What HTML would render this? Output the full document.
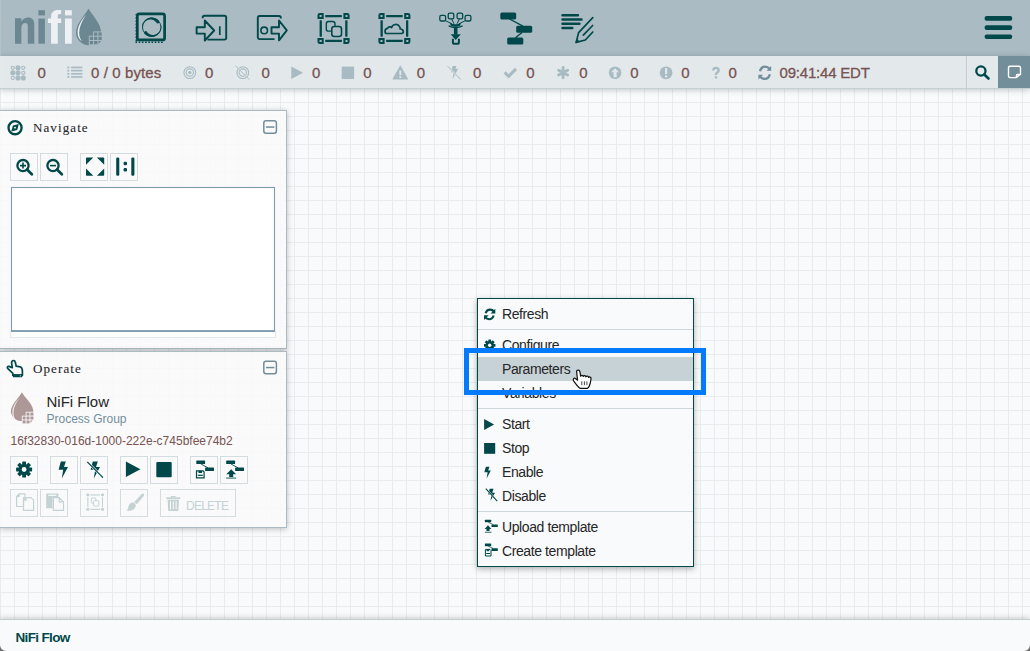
<!DOCTYPE html>
<html><head><meta charset="utf-8">
<style>
*{box-sizing:border-box}
html,body{margin:0;padding:0}
body{width:1030px;height:651px;overflow:hidden;position:relative;font-family:"Liberation Sans",sans-serif;background:#f9fafb}
.abs{position:absolute}
#canvas{position:absolute;left:0;top:88px;width:1030px;height:563px;background-color:#f9fafb;
 background-image:linear-gradient(to right,#e8ecee 1px,transparent 1px),linear-gradient(to bottom,#e8ecee 1px,transparent 1px);
 background-size:14px 14px}
#header{position:absolute;left:0;top:0;width:1030px;height:56px;background:#aabbc3}
#status{position:absolute;left:0;top:56px;width:1030px;height:33px;background:#e3e8eb;border-bottom:1px solid #c5d0d5;box-shadow:0 1px 6px rgba(0,0,0,0.22)}
#breadcrumbs{position:absolute;left:0;top:619px;width:1030px;height:32px;background:rgba(249,250,251,0.92);border-top:1px solid #c3ced3;box-shadow:0 -1px 6px rgba(0,0,0,0.2)}
.val{position:absolute;top:64px;font-size:15px;color:#775351;line-height:18px;-webkit-text-stroke:0.3px #775351}
.sico{position:absolute;fill:#a9bcc4}
svg{position:absolute;overflow:visible}
.panel{position:absolute;left:0;width:287px;background:rgba(249,250,251,0.9);border:1px solid #aabbc3;border-left:none;box-shadow:0 1px 6px rgba(0,0,0,0.25)}
.sep{position:absolute;left:0;width:215px;height:1px;background:#cdd6da}
.mi{position:absolute;left:502px;font-size:14px;line-height:16px;color:#262626;letter-spacing:-0.4px}
.ptitle{position:absolute;font-family:"Liberation Serif",serif;font-size:13px;line-height:16px;color:#262626;letter-spacing:1.1px;-webkit-text-stroke:0.1px #262626}
</style></head>
<body>
<div id="canvas"></div>

<div id="header">
<svg width="1030" height="56" viewBox="0 0 1030 56" style="left:0;top:0">
 <!-- logo -->
 <g fill="#6b8792">
  <path d="M15 18.2 H21.4 V21.6 C23 19 25.5 17.5 28.3 17.5 C32 17.5 34.3 20 34.3 24.5 V43.7 H27.8 V26 C27.8 24 27 23 25.3 23 C23.2 23 21.4 24.8 21.4 27.5 V43.7 H15 Z"/>
  <rect x="38.4" y="18.6" width="6.5" height="25.1"/>
  <rect x="38.4" y="10.2" width="6.5" height="5.2"/>
 </g>
 <g fill="#eef1f3">
  <path d="M51.1 43.7 V23.1 H47.9 V18.5 H51.1 V17 C51.1 12.2 53.6 10 58 10 C59.3 10 60.3 10.1 61.2 10.3 V14.2 C60.6 14.1 60 14.1 59.5 14.1 C58.3 14.1 57.8 14.8 57.8 16.2 V18.5 H61.2 V23.1 H57.8 V43.7 Z"/>
  <rect x="65" y="18.5" width="6.8" height="25.2"/>
  <rect x="65" y="10.2" width="6.8" height="5.2"/>
 </g>
 <path fill="#6b8792" d="M88.5 8.5 C91.5 14.5 101.2 23.5 101.2 32.6 A12.6 12.6 0 0 1 76 32.6 C76 23.5 85.5 14.5 88.5 8.5 Z"/>
 <g fill="#aabbc3">
  <rect x="93.1" y="31.4" width="9.6" height="5"/><rect x="88.8" y="35.7" width="13.9" height="9.8"/>
 </g>
 <g fill="#6b8792">
  <rect x="94.1" y="32.4" width="3.3" height="3.3"/><rect x="98.4" y="32.4" width="3.3" height="3.3"/>
  <rect x="89.8" y="36.7" width="3.3" height="3.3"/><rect x="94.1" y="36.7" width="3.3" height="3.3"/><rect x="98.4" y="36.7" width="3.3" height="3.3"/>
  <rect x="89.8" y="41" width="3.3" height="3.3"/><rect x="94.1" y="41" width="3.3" height="3.3"/><path d="M98.4 41 H101 L98.4 44 Z"/>
 </g>
 <path fill="#e9eef0" d="M86.2 14.8 C80.5 21 77.5 27 77.6 32.8 C77.7 37 79.6 40 82.4 41.6 C80.4 39.3 79.2 36.5 79.2 32.8 C79.2 27 82 21 86.2 14.8 Z"/>
 <g fill="none" stroke="#004849">
  <!-- processor -->
  <rect x="137.3" y="13.9" width="27.3" height="26" rx="2" stroke-width="2.7"/>
  <path d="M136.3 14 V42.5 M135.5 42.3 H164" stroke-width="1.5" stroke-dasharray="1.6 1.6"/>
  <circle cx="151.7" cy="27.2" r="9.2" stroke-width="0.9"/>
  <path fill="#004849" stroke="none" d="M142.15 28.88 L142.02 27.85 L142.01 26.81 L142.11 25.77 L142.32 24.74 L142.63 23.75 L143.06 22.80 L143.58 21.89 L144.20 21.05 L144.90 20.28 L145.68 19.59 L146.54 18.99 L147.45 18.48 L148.41 18.08 L149.41 17.77 L150.43 17.58 L151.47 17.50 L152.52 17.53 L153.55 17.68 L154.56 17.93 L155.54 18.29 L156.48 18.76 L157.36 19.32 L158.17 19.97 L158.91 20.71 A1.60 1.60 0 0 1 156.53 22.85 L156.53 22.85 L156.14 22.24 L155.66 21.68 L155.12 21.15 L154.51 20.69 L153.83 20.29 L153.11 19.96 L152.33 19.72 L151.52 19.55 L150.68 19.49 L149.83 19.51 L148.97 19.64 L148.12 19.86 L147.29 20.19 L146.49 20.61 L145.73 21.12 L145.03 21.73 L144.39 22.42 L143.83 23.19 L143.35 24.02 L142.97 24.91 L142.69 25.85 L142.52 26.83 L142.47 27.82 L142.54 28.81 Z"/>
  <path fill="#004849" stroke="none" d="M161.25 25.52 L161.38 26.55 L161.39 27.59 L161.29 28.63 L161.08 29.66 L160.77 30.65 L160.34 31.60 L159.82 32.51 L159.20 33.35 L158.50 34.12 L157.72 34.81 L156.86 35.41 L155.95 35.92 L154.99 36.32 L153.99 36.63 L152.97 36.82 L151.93 36.90 L150.88 36.87 L149.85 36.72 L148.84 36.47 L147.86 36.11 L146.92 35.64 L146.04 35.08 L145.23 34.43 L144.49 33.69 A1.60 1.60 0 0 1 146.87 31.55 L146.87 31.55 L147.26 32.16 L147.74 32.72 L148.28 33.25 L148.89 33.71 L149.57 34.11 L150.29 34.44 L151.07 34.68 L151.88 34.85 L152.72 34.91 L153.57 34.89 L154.43 34.76 L155.28 34.54 L156.11 34.21 L156.91 33.79 L157.67 33.28 L158.37 32.67 L159.01 31.98 L159.57 31.21 L160.05 30.38 L160.43 29.49 L160.71 28.55 L160.88 27.57 L160.93 26.58 L160.86 25.59 Z"/>
  <!-- input port -->
  <path d="M202.7 18.3 V17.6 a1.8 1.8 0 0 1 1.8 -1.8 H224.4 a1.8 1.8 0 0 1 1.8 1.8 V37.8 a1.8 1.8 0 0 1 -1.8 1.8 H207.5" stroke-width="1.9"/>
  <path d="M196.6 27.3 H204.8 V20.5 L214.2 30.5 L204.8 40.5 V33.6 H196.6 Z" stroke-width="1.9" stroke-linejoin="round"/>
  <path d="M219.8 26.3 V35" stroke-width="1.7"/>
  <!-- output port -->
  <path d="M280.8 18.5 V17.8 a1.8 1.8 0 0 0 -1.8 -1.8 H259.6 a1.8 1.8 0 0 0 -1.8 1.8 V37.3 a1.8 1.8 0 0 0 1.8 1.8 H274.5" stroke-width="1.9"/>
  <path d="M271.5 27.3 H279 V20.5 L286.8 30.4 L279 40.3 V33.6 H271.5 Z" stroke-width="1.9" stroke-linejoin="round"/>
  <circle cx="264.2" cy="30.4" r="3.3" stroke-width="1.6"/>
 </g>
 <g fill="#004849">
  <!-- process group frame -->
  <path fill-rule="evenodd" d="M317.5 19.1 V15.3 A2.4 2.4 0 0 1 319.9 12.9 H323.7 V19.1 Z M319.6 15.0 h2.0 v2.0 h-2.0 Z M349.6 19.1 V15.3 A2.4 2.4 0 0 0 347.20000000000005 12.9 H343.40000000000003 V19.1 Z M347.5 15.0 h-2.0 v2.0 h2.0 Z M317.5 37.9 V41.7 A2.4 2.4 0 0 0 319.9 44.1 H323.7 V37.9 Z M319.6 42.0 h2.0 v-2.0 h-2.0 Z M349.6 37.9 V41.7 A2.4 2.4 0 0 1 347.20000000000005 44.1 H343.40000000000003 V37.9 Z M347.5 42.0 h-2.0 v-2.0 h2.0 Z"/>
  <rect x="325.2" y="15.0" width="16.700000000000024" height="2.2" rx="0.4"/><rect x="325.2" y="39.800000000000004" width="16.700000000000024" height="2.2" rx="0.4"/>
  <rect x="319.6" y="20.3" width="2.3" height="16.400000000000002" rx="0.4"/><rect x="345.20000000000005" y="20.3" width="2.3" height="16.400000000000002" rx="0.4"/>
  <!-- remote pg frame -->
  <path fill-rule="evenodd" d="M378.4 19.1 V15.3 A2.4 2.4 0 0 1 380.79999999999995 12.9 H384.59999999999997 V19.1 Z M380.5 15.0 h2.0 v2.0 h-2.0 Z M410.4 19.1 V15.3 A2.4 2.4 0 0 0 408.0 12.9 H404.2 V19.1 Z M408.29999999999995 15.0 h-2.0 v2.0 h2.0 Z M378.4 37.9 V41.7 A2.4 2.4 0 0 0 380.79999999999995 44.1 H384.59999999999997 V37.9 Z M380.5 42.0 h2.0 v-2.0 h-2.0 Z M410.4 37.9 V41.7 A2.4 2.4 0 0 1 408.0 44.1 H404.2 V37.9 Z M408.29999999999995 42.0 h-2.0 v-2.0 h2.0 Z"/>
  <rect x="386.09999999999997" y="15.0" width="16.6" height="2.2" rx="0.4"/><rect x="386.09999999999997" y="39.800000000000004" width="16.6" height="2.2" rx="0.4"/>
  <rect x="380.5" y="20.3" width="2.3" height="16.400000000000002" rx="0.4"/><rect x="406.0" y="20.3" width="2.3" height="16.400000000000002" rx="0.4"/>
 </g>
 <g fill="none" stroke="#004849">
  <rect x="326.3" y="21.5" width="8.7" height="9.6" rx="2.2" stroke-width="1.4"/>
  <rect x="331.8" y="26.5" width="9.7" height="10" rx="2.4" stroke-width="1.6" fill="#aabbc3"/>
  <path d="M386.6 33.5 C384.5 33.3 384.2 28.6 387.6 28.4 C388 26.6 390.6 26.3 391.6 27.6 C392.4 24.3 397.5 23 399.6 26.6 C400.2 27.5 400.3 28.3 400.1 29 C403.6 28.8 404.5 33.5 401.5 33.5 Z" stroke-width="1.7" stroke-linejoin="round"/>
 </g>
 <!-- funnel -->
 <g fill="none" stroke="#004849" stroke-width="1.3">
  <rect x="439.8" y="15.4" width="5.8" height="5.6" rx="1.6"/>
  <rect x="448.2" y="13.2" width="5.6" height="5.6" rx="1.6"/>
  <rect x="457.1" y="13.2" width="5.6" height="5.6" rx="1.6"/>
  <rect x="465.1" y="15.4" width="5.8" height="5.6" rx="1.6"/>
  <path d="M445.6 20.8 L452 23.8 M451.5 18.8 L454 23.8 M459.5 18.8 L457 23.8 M465.1 20.8 L459 23.8" stroke-width="1"/>
  <path d="M448.6 25.8 Q455.5 29.2 462.6 25.8" stroke-width="1.3"/>
 </g>
 <g fill="#004849">
  <path d="M449.8 23 Q455.5 25.6 461 23 L460 25.8 Q455.5 27.6 450.8 25.8 Z"/>
  <rect x="453.9" y="27.2" width="3.6" height="7.4"/>
  <path d="M450.7 34.2 H460.8 L455.7 40 Z"/>
 </g>
 <path fill="none" stroke="#004849" stroke-width="2" d="M452.9 38.7 V42.2 a1.6 1.6 0 0 0 1.6 1.6 H457.3 a1.6 1.6 0 0 0 1.6 -1.6 V38.7"/>
 <!-- template -->
 <g fill="#004849">
  <rect x="500.3" y="12.6" width="15.9" height="6.8" rx="1.5"/>
  <rect x="516.2" y="25.8" width="16" height="6.9" rx="1.5"/>
  <rect x="507.2" y="37.6" width="16.1" height="6.9" rx="1.5"/>
 </g>
 <path fill="none" stroke="#004849" stroke-width="1.4" d="M509.5 19 L523 26.2 M522 32.5 L515.5 37.8"/>
 <!-- label -->
 <g fill="none" stroke="#004849" stroke-width="2.5" stroke-linecap="round">
  <path d="M562.5 15.2 H577.9 M562.5 19.5 H581.5 M562.5 23.7 H579.4 M562.5 28.1 H572.3"/>
 </g>
 <g fill="none" stroke="#004849" stroke-width="1.7" stroke-linecap="round" stroke-linejoin="round">
  <path d="M592.8 17.6 L578.6 32.6 L576.2 42.4 L585.3 40 L592.8 32"/>
  <path d="M592.6 25.5 L583.3 35.2"/>
 </g>
 <path fill="#004849" d="M575.2 43.3 L576.5 38.5 L580 41.8 Z"/>
 <!-- hamburger -->
 <g fill="#004849">
  <rect x="984.6" y="16.1" width="27.6" height="4.6" rx="2"/>
  <rect x="984.6" y="25.3" width="27.6" height="4.6" rx="2"/>
  <rect x="984.6" y="34.5" width="27.6" height="4.6" rx="2"/>
 </g>
</svg>
</div>
<div id="status">
 <div class="abs" style="left:966px;top:0;width:1px;height:32px;background:#c3ced3"></div>
 <div class="abs" style="left:998px;top:0;width:32px;height:32px;background:#728e9b"></div>
</div>
<svg width="1030" height="32" viewBox="0 56 1030 32" style="left:0;top:56px">
 <g fill="#a8bbc3" stroke="#a8bbc3">
  <!-- cluster dots -->
  <g stroke-width="1.1">
   <circle cx="12.8" cy="67.8" r="1.6" fill="none"/><circle cx="18" cy="67.8" r="2"/><circle cx="23.3" cy="67.8" r="1.6" fill="none"/>
   <circle cx="12.8" cy="72.8" r="2"/><circle cx="18" cy="72.8" r="2"/><circle cx="23.3" cy="72.8" r="1.6" fill="none"/>
   <circle cx="12.8" cy="77.9" r="1.6" fill="none"/><circle cx="18" cy="77.9" r="2"/><circle cx="23.3" cy="77.9" r="2"/>
  </g>
  <!-- list -->
  <g stroke="none">
   <rect x="67.4" y="66.5" width="1.9" height="1.9"/><rect x="67.4" y="69.7" width="1.9" height="1.9"/><rect x="67.4" y="72.9" width="1.9" height="1.9"/><rect x="67.4" y="76" width="1.9" height="1.9"/>
   <rect x="71" y="66.6" width="11.4" height="1.7"/><rect x="71" y="69.8" width="11.4" height="1.7"/><rect x="71" y="73" width="11.4" height="1.7"/><rect x="71" y="76.1" width="11.4" height="1.7"/>
  </g>
  <!-- transmitting -->
  <g fill="none" stroke-width="1.1">
   <circle cx="189.8" cy="72.6" r="5.9"/><circle cx="189.8" cy="72.6" r="3.7"/>
  </g>
  <circle cx="189.8" cy="72.6" r="1.7" stroke="none"/>
  <!-- not transmitting -->
  <g fill="none" stroke-width="1.1">
   <circle cx="242.8" cy="72.6" r="5.9"/><circle cx="242.8" cy="72.6" r="3.7"/>
   <path d="M235.5 65.4 L249.6 79.8" stroke-width="1.3" stroke="#e3e8eb" />
   <path d="M235.3 65.6 L249.3 79.6" stroke-width="1"/>
  </g>
  <!-- play -->
  <path stroke="none" d="M291.3 66.6 L303 72.8 L291.3 79 Z"/>
  <!-- stop -->
  <rect stroke="none" x="341.7" y="66.6" width="12.4" height="12.4"/>
  <!-- warning -->
  <path stroke="none" d="M400.3 65.3 L408 78.8 a0.6 0.6 0 0 1 -0.5 0.8 H393.1 a0.6 0.6 0 0 1 -0.5 -0.8 Z"/>
  <rect stroke="none" x="399.4" y="70.5" width="1.8" height="4.8" fill="#e3e8eb"/>
  <rect stroke="none" x="399.4" y="76.3" width="1.8" height="1.7" fill="#e3e8eb"/>
  <!-- disabled -->
  <path stroke="none" d="M452.5 65.9 H456.6 L455.3 68.8 H458.2 L452.4 79.4 L453.7 72.2 H451.2 Z"/>
  <path fill="none" stroke="#e3e8eb" stroke-width="1.6" d="M447.8 66.3 L460.6 79.6"/>
  <path fill="none" stroke-width="1" d="M447.6 66.2 L460.8 79.5"/>
  <!-- check -->
  <path fill="none" stroke-width="3" stroke-linejoin="miter" stroke-linecap="butt" d="M504.6 72.4 L508.7 76.3 L516 68.9"/>
  <!-- asterisk -->
  <g stroke-width="2.9" stroke-linecap="round" fill="none">
   <path d="M563.1 67.5 V77.8 M558.6 70.2 L567.6 75.1 M558.6 75.1 L567.6 70.2"/>
  </g>
  <!-- up circle -->
  <circle cx="615.1" cy="72.7" r="6.3" stroke="none"/>
  <path fill="#e3e8eb" stroke="none" d="M615.1 68.2 L619 72.2 H616.6 V77.2 H613.6 V72.2 H611.2 Z"/>
  <!-- exclamation -->
  <circle cx="666.1" cy="72.8" r="6.4" stroke="none"/>
  <rect stroke="none" x="665" y="68.2" width="2.2" height="5.8" fill="#e3e8eb"/>
  <rect stroke="none" x="665" y="75.3" width="2.2" height="2" fill="#e3e8eb"/>
  <!-- question -->
  <path fill="none" stroke-width="2.4" d="M713.3 70.6 C713.3 68.6 714.5 67.9 716 67.9 C717.6 67.9 718.7 68.9 718.7 70.2 C718.7 72.4 716 72.4 716 74.5 V74.9"/>
  <rect stroke="none" x="714.8" y="76.2" width="2.4" height="2.2" rx="0.4"/>
 </g>
 <!-- refresh -->
 <g fill="#728e9b" stroke="#728e9b">
  <path fill="none" stroke-width="2.3" d="M760 71.3 C760.7 68.2 763.2 66.6 765.2 66.6 C767.2 66.6 768.5 67.5 769.5 68.8"/>
  <path stroke="none" d="M771.2 66 V70.8 H766.5 Z"/>
  <path fill="none" stroke-width="2.3" d="M769.8 74.2 C769.1 77.3 766.6 78.9 764.6 78.9 C762.6 78.9 761.3 78 760.3 76.7"/>
  <path stroke="none" d="M758.4 79.5 V74.7 H763.1 Z"/>
 </g>
 <!-- graph search -->
 <g fill="none" stroke="#004849">
  <circle cx="980.9" cy="71" r="4.6" stroke-width="2.3"/>
  <path d="M984.3 74.5 L988.5 78.5" stroke-width="2.6" stroke-linecap="round"/>
 </g>
 <!-- note icon -->
 <path fill="none" stroke="#ffffff" stroke-width="1.4" stroke-linejoin="round" d="M1010 66.2 H1019 a1.5 1.5 0 0 1 1.5 1.5 V74.2 L1016.2 77.6 H1010 a1.5 1.5 0 0 1 -1.5 -1.5 V67.7 a1.5 1.5 0 0 1 1.5 -1.5 Z M1016.4 77.4 V75.5 a1 1 0 0 1 1 -1 H1020.3"/>
</svg>
<div class="val" style="left:37.5px">0</div>
<div class="val" style="left:91px;letter-spacing:0.1px">0 / 0 bytes</div>
<div class="val" style="left:205px">0</div>
<div class="val" style="left:261.5px">0</div>
<div class="val" style="left:312px">0</div>
<div class="val" style="left:363.3px">0</div>
<div class="val" style="left:416.8px">0</div>
<div class="val" style="left:473px">0</div>
<div class="val" style="left:526.3px">0</div>
<div class="val" style="left:579.2px">0</div>
<div class="val" style="left:630.3px">0</div>
<div class="val" style="left:681.3px">0</div>
<div class="val" style="left:728.6px">0</div>
<div class="val" style="left:779.5px;letter-spacing:-0.2px">09:41:44 EDT</div>

<!-- NAVIGATE PANEL -->
<div class="panel" style="top:110px;height:239px"></div>
<div class="panel" style="top:351px;height:177px"></div>
<svg width="290" height="420" viewBox="0 110 290 420" style="left:0;top:110px">
 <!-- compass -->
 <circle cx="15.05" cy="127.7" r="6.55" fill="none" stroke="#004849" stroke-width="2.3"/>
 <path fill="#004849" d="M18.8 123.9 L17.2 130 L11.3 131.5 L12.9 125.5 Z"/>
 <circle cx="15.05" cy="127.7" r="0.9" fill="#f9fafb"/>
 <!-- minimize navigate -->
 <rect x="263.8" y="120.8" width="12.6" height="12.4" rx="2.2" fill="none" stroke="#728e9b" stroke-width="1.5"/>
 <rect x="265.9" y="126.3" width="8.5" height="1.5" fill="#728e9b"/>
 <!-- minimize operate -->
 <rect x="263.8" y="361.3" width="12.6" height="12.4" rx="2.2" fill="none" stroke="#728e9b" stroke-width="1.5"/>
 <rect x="265.9" y="366.8" width="8.5" height="1.5" fill="#728e9b"/>
 <!-- nav buttons -->
 <g fill="none" stroke="#d3dde0" stroke-width="1">
  <rect x="10.5" y="153.5" width="27" height="27"/>
  <rect x="40.5" y="153.5" width="27" height="27"/>
  <rect x="80.5" y="153.5" width="27" height="27"/>
  <rect x="110.5" y="153.5" width="27" height="27"/>
 </g>
 <g fill="none" stroke="#004849">
  <circle cx="23" cy="165.6" r="5.6" stroke-width="2.3"/>
  <path d="M27 169.6 L31.8 174.2" stroke-width="2.8" stroke-linecap="round"/>
  <path d="M23 162.6 V168.6 M20 165.6 H26" stroke-width="1.6"/>
  <circle cx="53" cy="165.6" r="5.6" stroke-width="2.3"/>
  <path d="M57 169.6 L61.8 174.2" stroke-width="2.8" stroke-linecap="round"/>
  <path d="M50 165.6 H56" stroke-width="1.6"/>
 </g>
 <g fill="#004849">
  <path d="M86 158.3 a0.8 0.8 0 0 1 0.8 -0.8 H93.3 L86 164.8 Z"/>
  <path d="M104.2 158.3 a0.8 0.8 0 0 0 -0.8 -0.8 H96.9 L104.2 164.8 Z"/>
  <path d="M86 174.9 a0.8 0.8 0 0 0 0.8 0.8 H93.3 L86 168.4 Z"/>
  <path d="M104.2 174.9 a0.8 0.8 0 0 1 -0.8 0.8 H96.9 L104.2 168.4 Z"/>
  <rect x="116.2" y="157.5" width="3.1" height="18.2" rx="1.2"/>
  <rect x="131.3" y="157.5" width="3.1" height="18.2" rx="1.2"/>
  <rect x="123.6" y="161.8" width="3.4" height="3.4" rx="1.2"/>
  <rect x="123.6" y="168" width="3.4" height="3.4" rx="1.2"/>
 </g>
 <!-- birdseye -->
 <rect x="10.5" y="331.5" width="265" height="6" fill="#ffffff" stroke="#e3e9eb" stroke-width="1"/>
 <rect x="11.5" y="187.5" width="263" height="143.5" fill="#ffffff" stroke="#7f9caf" stroke-width="1.1"/>
 <rect x="11" y="330.2" width="264" height="1.8" fill="#7f9caf"/>

 <!-- hand icon -->
 <path fill="none" stroke="#004849" stroke-width="1.7" stroke-linejoin="round" d="M13.6 360.5 C12.2 360.5 11.5 361.5 11.6 363 L12.3 367.6 L9 366.4 C7.6 365.9 6.7 367.4 7.9 368.6 L12.8 373.3 V375.2 H22.4 V371 C22.4 369 21.4 367.3 20.2 366.8 L16.2 366.2 L15.3 362.3 C15.1 361.2 14.6 360.5 13.6 360.5 Z"/>
 <rect x="12.8" y="374.3" width="9.6" height="2.9" rx="0.6" fill="#004849"/>
 <circle cx="20.3" cy="375.8" r="0.6" fill="#f9fafb"/>

 <!-- drop icon (rose) -->
 <path fill="#ad9897" d="M21.9 392.3 C24 397 33.5 404 33.5 412.5 A11.7 11.7 0 0 1 10.8 412.5 C10.8 404 19.8 397 21.9 392.3 Z"/>
 <path fill="#f2eeee" d="M19.3 398 C14.5 403 12.3 408 12.3 412.6 C12.3 416.3 13.8 419.3 16.5 421.2 C14.5 418.8 13.5 416 13.5 412.6 C13.5 408 15.8 403 19.3 398 Z"/>
 <g fill="#f9fafb">
  <rect x="25.7" y="411.8" width="8.6" height="4.4"/><rect x="21.8" y="415.7" width="12.5" height="9.2"/>
 </g>
 <g fill="#ad9897">
  <rect x="26.5" y="412.6" width="3" height="3"/><rect x="30.4" y="412.6" width="3" height="3"/>
  <rect x="22.6" y="416.5" width="3" height="3"/><rect x="26.5" y="416.5" width="3" height="3"/><rect x="30.4" y="416.5" width="3" height="3"/>
  <rect x="22.6" y="420.4" width="3" height="3"/><rect x="26.5" y="420.4" width="3" height="3"/><path d="M30.4 420.4 H32.6 L30.4 423 Z"/>
 </g>
 <!-- operate buttons row 1 -->
 <g fill="none" stroke="#d3dde0" stroke-width="1">
  <rect x="10.5" y="456.5" width="27" height="27"/>
  <rect x="50.5" y="456.5" width="27" height="27"/>
  <rect x="80.5" y="456.5" width="27" height="27"/>
  <rect x="120.5" y="456.5" width="27" height="27"/>
  <rect x="150.5" y="456.5" width="27" height="27"/>
  <rect x="190.5" y="456.5" width="27" height="27"/>
  <rect x="220.5" y="456.5" width="27" height="27"/>
  <rect x="10.5" y="489.5" width="27" height="27"/>
  <rect x="40.5" y="489.5" width="27" height="27"/>
  <rect x="80.5" y="489.5" width="27" height="27"/>
  <rect x="120.5" y="489.5" width="27" height="27"/>
  <rect x="160.5" y="489.5" width="75" height="27"/>
 </g>
 <!-- gear -->
 <g fill="#004849" transform="translate(24.1 469.5)">
  <circle r="5.6"/>
  <g>
   <rect x="-1.9" y="-8" width="3.8" height="16" rx="0.6"/>
   <rect x="-1.9" y="-8" width="3.8" height="16" rx="0.6" transform="rotate(45)"/>
   <rect x="-1.9" y="-8" width="3.8" height="16" rx="0.6" transform="rotate(90)"/>
   <rect x="-1.9" y="-8" width="3.8" height="16" rx="0.6" transform="rotate(135)"/>
  </g>
  <circle r="2.4" fill="#f9fafb"/>
 </g>
 <!-- flash -->
 <path fill="#004849" d="M60.8 461.6 H65.8 L64 467 H68 L61.8 478.5 L63.2 469.8 H58.6 Z"/>
 <!-- disable -->
 <path fill="#004849" d="M92.8 461.6 H97.8 L96 467 H100 L93.8 478.5 L95.2 469.8 H90.6 Z"/>
 <path fill="none" stroke="#f9fafb" stroke-width="2.2" d="M87.3 461.9 L103 477.6"/>
 <path fill="none" stroke="#004849" stroke-width="1.3" d="M87.3 461.9 L103 477.6"/>
 <!-- play -->
 <path fill="#004849" d="M125.9 461.5 L140.4 469.3 L125.9 477.1 Z"/>
 <!-- stop -->
 <rect x="156.3" y="461.9" width="15.4" height="15.3" rx="1" fill="#004849"/>
 <!-- save template -->
 <g fill="#004849">
  <rect x="196.3" y="460.6" width="8.8" height="3.5" rx="0.6"/>
  <rect x="205.1" y="467.6" width="8.9" height="3.5" rx="0.6"/>
  <rect x="226.2" y="460.6" width="8.9" height="3.5" rx="0.6"/>
  <rect x="235.1" y="467.6" width="8.9" height="3.5" rx="0.6"/>
 </g>
 <path fill="none" stroke="#004849" stroke-width="0.9" d="M201 464 L208 467.8 M231 464 L238 467.8"/>
 <path fill="none" stroke="#004849" stroke-width="1.2" d="M196.5 470.8 H203 L204.1 472 V477.8 H196.5 Z"/>
 <rect x="198.5" y="470.8" width="3.5" height="2.2" fill="#004849"/>
 <rect x="197.8" y="474.7" width="5" height="1.2" fill="#004849"/>
 <path fill="#004849" d="M231.2 469.2 L236.1 474.2 H233.2 V477 H229.2 V474.2 H226.3 Z"/>
 <rect x="226.2" y="477.6" width="9.9" height="0.9" fill="#004849"/>

 <!-- row 2 disabled -->
 <g fill="none" stroke="#c4d2d4" stroke-width="1.2" stroke-linejoin="round">
  <path d="M19.2 493.9 H25 V497.5 H23.5 V506.5 H16.6 V496.5 Z M16.6 496.5 H19.2 V493.9"/>
  <path d="M26.1 497.6 H31 L33.6 500.2 V510.4 H23.5 V500.2 Z M23.5 500.2 H26.1 V497.6"/>
  <path d="M53.4 497.6 H59.2 L63.5 501.9 V510.4 H53.4 Z M59.2 497.6 V501.9 H63.5"/>
 </g>
 <path fill="#c4d2d4" d="M46.2 494.3 a0.7 0.7 0 0 1 0.7 -0.7 H57.8 a0.7 0.7 0 0 1 0.7 0.7 V497 H52.6 V508.2 H46.2 Z"/>
 <rect x="48.3" y="494.7" width="8" height="1.2" fill="#f9fafb"/>
 <g fill="#c4d2d4">
  <rect x="86.3" y="493.6" width="3" height="2.6" rx="0.8"/><rect x="101" y="493.6" width="3" height="2.6" rx="0.8"/>
  <rect x="86.3" y="508.1" width="3" height="2.6" rx="0.8"/><rect x="101" y="508.1" width="3" height="2.6" rx="0.8"/>
  <rect x="90.3" y="494.4" width="9.8" height="1.1"/><rect x="90.3" y="508.8" width="9.8" height="1.1"/>
  <rect x="87.3" y="497.2" width="1.1" height="10"/><rect x="101.9" y="497.2" width="1.1" height="10"/>
 </g>
 <g fill="none" stroke="#c4d2d4" stroke-width="1">
  <rect x="91.3" y="498" width="4.6" height="5.2" rx="1"/>
  <rect x="93.6" y="500.6" width="5.3" height="5.5" rx="1.2" fill="#f9fafb"/>
 </g>
 <!-- brush -->
 <path fill="#c4d2d4" d="M143.2 493.6 C144.5 493.8 144.4 495.2 143.6 496.3 L136.7 504.3 L134.3 502 L141.4 494.3 C142 493.8 142.6 493.5 143.2 493.6 Z"/>
 <path fill="#c4d2d4" d="M133.6 502.6 C135.6 503.4 136.3 505.5 135.2 507.6 C133.8 510.3 129.5 511.7 126.4 510.3 C128.2 509.6 128 508.5 128.4 506.6 C128.9 504 131.3 502 133.6 502.6 Z"/>
 <!-- trash -->
 <g fill="#c4d2d4">
  <rect x="166.3" y="497.3" width="14" height="1.8"/>
  <path d="M171 497.5 V495.9 H175.6 V497.5 H174.4 V496.9 H172.2 V497.5 Z"/>
  <path d="M167.6 499.8 H179 L178.4 510.4 a0.8 0.8 0 0 1 -0.8 0.7 H169 a0.8 0.8 0 0 1 -0.8 -0.7 Z"/>
 </g>
 <g fill="#f9fafb">
  <rect x="170" y="501.3" width="1" height="8"/><rect x="172.8" y="501.3" width="1" height="8"/><rect x="175.6" y="501.3" width="1" height="8"/>
 </g>
</svg>
<div class="ptitle" style="left:33px;top:120px">Navigate</div>
<div class="ptitle" style="left:33px;top:361px">Operate</div>
<div class="abs" style="left:46.5px;top:393px;font-size:15px;line-height:18px;color:#262626">NiFi Flow</div>
<div class="abs" style="left:46.5px;top:412px;font-size:12px;line-height:14px;color:#728e9b">Process Group</div>
<div class="abs" style="left:10.5px;top:434px;font-size:12px;line-height:14px;color:#775351">16f32830-016d-1000-222e-c745bfee74b2</div>
<div class="abs" style="left:186px;top:499px;font-size:12px;line-height:14px;color:#c4d2d4;letter-spacing:-0.75px">DELETE</div>

<!-- CONTEXT MENU -->
<div id="menu" style="position:absolute;left:477px;top:298px;width:217px;height:269px;background:rgba(249,250,251,0.96);border:1px solid #004849;box-shadow:0 2px 6px rgba(0,0,0,0.3)">
 <div class="sep" style="top:30px"></div>
 <div class="abs" style="left:0;top:58px;width:215px;height:24px;background:#c7d2d6"></div>
 <div class="sep" style="top:109px"></div>
 <div class="sep" style="top:212px"></div>
</div>
<div class="mi" style="top:306px">Refresh</div>
<div class="mi" style="top:337px">Configure</div>
<div class="mi" style="top:361px">Parameters</div>
<div class="mi" style="top:385px">Variables</div>
<div class="mi" style="top:416px">Start</div>
<div class="mi" style="top:440px">Stop</div>
<div class="mi" style="top:464px">Enable</div>
<div class="mi" style="top:488px">Disable</div>
<div class="mi" style="top:519px">Upload template</div>
<div class="mi" style="top:543px">Create template</div>
<svg width="40" height="270" viewBox="478 298 40 270" style="left:478px;top:298px">
 <!-- refresh -->
 <g fill="#004849" stroke="#004849">
  <path fill="none" stroke-width="2.1" d="M485.7 313.3 C486.4 310.5 488.7 309.6 490.2 309.6 C492 309.6 493.2 310.4 494 311.6"/>
  <path stroke="none" d="M495.3 308.8 V313.6 H490.6 Z"/>
  <path fill="none" stroke-width="2.1" d="M493.6 315.5 C492.9 318.3 490.6 319.2 489.1 319.2 C487.3 319.2 486.1 318.4 485.3 317.2"/>
  <path stroke="none" d="M484 320 V315.2 H488.7 Z"/>
 </g>
 <!-- gear -->
 <g fill="#004849" transform="translate(489.7 345.3) scale(0.72)">
  <circle r="5.6"/>
  <rect x="-1.9" y="-8" width="3.8" height="16" rx="0.6"/>
  <rect x="-1.9" y="-8" width="3.8" height="16" rx="0.6" transform="rotate(45)"/>
  <rect x="-1.9" y="-8" width="3.8" height="16" rx="0.6" transform="rotate(90)"/>
  <rect x="-1.9" y="-8" width="3.8" height="16" rx="0.6" transform="rotate(135)"/>
  <circle r="2.4" fill="#f9fafb"/>
 </g>
 <!-- start -->
 <path fill="#004849" d="M484.1 418.9 L494.1 424.45 L484.1 430 Z"/>
 <!-- stop -->
 <rect x="484.1" y="443" width="11.1" height="10.8" fill="#004849"/>
 <!-- enable -->
 <path fill="#004849" d="M485.9 466.8 H489.4 L488.2 470.6 H490.8 L486.6 478.4 L487.6 472.3 H484.3 Z"/>
 <!-- disable -->
 <path fill="#004849" d="M489.7 488.8 H493.5 L492.2 492.8 H495 L490.5 500.8 L491.6 494.5 H488.1 Z"/>
 <path fill="none" stroke="#f9fafb" stroke-width="1.8" d="M485.8 488.6 L497.2 501.2"/>
 <path fill="none" stroke="#004849" stroke-width="1.1" d="M485.8 488.6 L497.2 501.2"/>
 <!-- upload template -->
 <g fill="#004849">
  <rect x="484.9" y="519.7" width="6.3" height="2.6" rx="0.5"/>
  <rect x="491.5" y="524.4" width="6.3" height="2.6" rx="0.5"/>
  <path d="M488 525.3 L491.4 528.9 H489.5 V531 H486.5 V528.9 H484.6 Z"/>
  <rect x="484.9" y="531.8" width="6.6" height="0.8"/>
  <rect x="484.9" y="543.6" width="6.3" height="2.6" rx="0.5"/>
  <rect x="491.5" y="548.3" width="6.3" height="2.6" rx="0.5"/>
 </g>
 <path fill="none" stroke="#004849" stroke-width="0.7" d="M488.2 522.2 L493.3 524.6 M488.2 546.1 L493.3 548.5"/>
 <path fill="none" stroke="#004849" stroke-width="1" d="M485.4 549.4 H490 L491 550.4 V556 H485.4 Z"/>
 <rect x="486.6" y="549.4" width="2.6" height="1.8" fill="#004849"/>
 <rect x="486.2" y="553" width="4" height="1" fill="#004849"/>
</svg>
<!-- highlight box -->
<div class="abs" style="left:464px;top:348px;width:242px;height:47px;border:5px solid #047afc"></div>
<!-- cursor -->
<svg width="24" height="24" viewBox="570 368 24 24" style="left:570px;top:368px">
 <path fill="#ffffff" stroke="#111111" stroke-width="1.2" stroke-linejoin="round" d="M576.6 371.6 C576.6 369.8 579.6 369.6 579.9 371.6 L580.6 376.2 C581.2 375 583.1 375 583.3 376.4 C583.8 375.3 585.7 375.3 585.9 376.8 C586.5 375.8 588.4 375.8 588.6 377.4 C589.3 376.6 591.2 376.9 591 378.8 L590.2 383.5 C589.6 386 588.8 387.4 587.6 388.4 L580 388.4 C578 386.8 575.5 383.5 573.6 380.8 C572.6 379.3 573.8 377.6 575.4 378.5 L577.6 380.2 Z"/>
 <path fill="none" stroke="#333333" stroke-width="0.9" d="M581.8 381.3 V385.2 M584.4 381.3 V385.2 M586.9 381.3 V385.2"/>
</svg>

<div id="breadcrumbs">
  <div class="abs" style="left:15.5px;top:9.5px;font-size:13.5px;font-weight:bold;color:#004849;letter-spacing:-0.65px;line-height:16px">NiFi Flow</div>
</div>
<div class="abs" style="left:0;top:0;width:1px;height:88px;background:rgba(255,255,255,0.12)"></div>
<svg width="1030" height="10" viewBox="0 641 1030 10" style="left:0;top:641px">
 <path fill="#6e6e6e" d="M0 645 V651 H6 A6 6 0 0 1 0 645 Z"/>
 <path fill="#6e6e6e" d="M1030 645 V651 H1024 A6 6 0 0 0 1030 645 Z"/>
</svg>
</body></html>
